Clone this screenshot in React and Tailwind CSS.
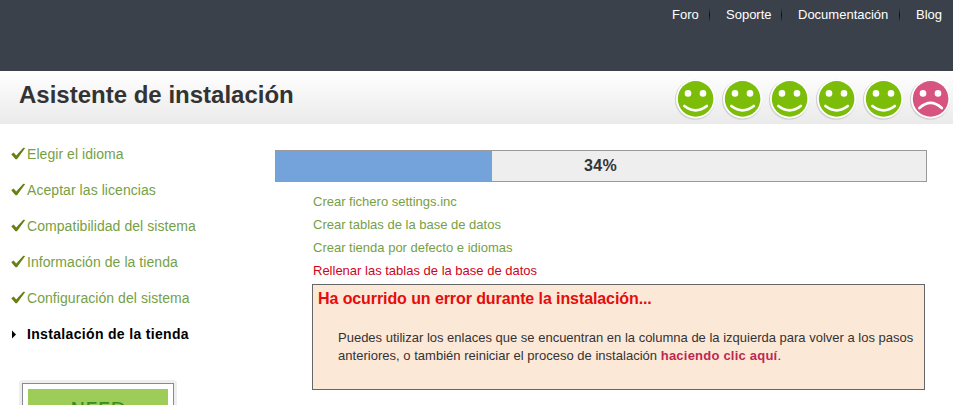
import React from 'react';
import clsx from 'clsx';

const links = [
  { label: 'Foro', width: 'w-[27px]' },
  { label: 'Soporte', width: 'w-[45px]' },
  { label: 'Documentación', width: 'w-[91px]' },
  { label: 'Blog', width: 'w-[27px]' },
];

const steps = [
  { label: 'Elegir el idioma', done: true },
  { label: 'Aceptar las licencias', done: true },
  { label: 'Compatibilidad del sistema', done: true },
  { label: 'Información de la tienda', done: true },
  { label: 'Configuración del sistema', done: true },
  { label: 'Instalación de la tienda', done: false },
];

const tasks = [
  { label: 'Crear fichero settings.inc' },
  { label: 'Crear tablas de la base de datos' },
  { label: 'Crear tienda por defecto e idiomas' },
  { label: 'Rellenar las tablas de la base de datos', failed: true },
];

const faces = [true, true, true, true, true, false];

const progress = 34;

function Face({ happy }) {
  return (
    <svg className="block w-[47px] h-[47px] shrink-0" viewBox="0 0 47 47">
      <circle cx="24" cy="24.7" r="20.1" fill="#d0d0d0" />
      <circle cx="24.6" cy="23.9" r="19.6" fill="#fff" />
      <circle cx="24.6" cy="23.9" r="17.8" fill={happy ? '#7cbd0a' : '#d6547f'} />
      <circle cx="17" cy="18.4" r="3.3" fill="#fff" />
      <circle cx="32" cy="18.4" r="3.3" fill="#fff" />
      <path
        d={happy ? 'M13.4 31Q24.6 39.6 35.8 31' : 'M13.4 33Q24.6 22.8 35.8 33'}
        fill="none"
        stroke="#fff"
        strokeWidth="2.7"
        strokeLinecap="round"
      />
    </svg>
  );
}

function StepIcon({ done }) {
  return (
    <svg className="block w-4 h-4 shrink-0" viewBox="0 0 16 16">
      {done ? (
        <path d="M0.2 8.2L2.7 6.4L5.2 9.6L12.3 1.8L14.2 2L6 13.2H4.5Z" fill="#668014" />
      ) : (
        <path d="M1 4.5L5 8.5L1 12.5Z" fill="#000" />
      )}
    </svg>
  );
}

export default function App() {
  return (
    <div className="w-[953px] h-[405px] overflow-hidden bg-white text-[#333] text-[13px] font-['Liberation_Sans',Arial,sans-serif]">
      <header className="h-[71px] bg-[#3b414b] flex justify-end items-start pt-[7px] pr-2.5">
        {links.map((link, i) => (
          <div key={link.label} className="flex items-center">
            {i > 0 && <span className="w-px h-3.5 ml-2.5 mr-4 bg-gradient-to-b from-[#3b414b] via-[#0c0d0f] to-[#3b414b]" />}
            <a href="#" className={clsx('block text-white leading-4 whitespace-nowrap', link.width)}>{link.label}</a>
          </div>
        ))}
      </header>

      {/* Title bar */}
      <div className="h-[53px] flex justify-between pl-[19px] bg-gradient-to-b from-white to-[#eaeaea]">
        <h1 className="pt-[9px] text-[24px] leading-[30px] font-bold">Asistente de instalación</h1>
        <div className="flex pt-1">
          {faces.map((happy, i) => <Face key={i} happy={happy} />)}
        </div>
      </div>

      <div className="flex">
        <aside className="w-[275px] shrink-0 pt-3 pl-[11px]">
          <ul>
            {steps.map((step) => (
              <li
                key={step.label}
                className={clsx(
                  'h-9 flex items-start text-[14px] leading-9',
                  step.done ? 'text-[#76a045] tracking-[0.06px]' : 'text-black font-bold tracking-[0.33px]'
                )}
              >
                <span className="pt-[10px]"><StepIcon done={step.done} /></span>
                <span className="whitespace-nowrap">{step.label}</span>
              </li>
            ))}
          </ul>
          {/* Help banner */}
          <div className="mt-7 ml-2 w-[158px] p-[3px] rounded bg-[#eeeef0]">
            <div className="border border-[#888a91] bg-white p-[5px] h-[90px]">
              <div className="h-full pt-2 bg-[#9dcc58] text-center text-[20px] leading-6 text-[#348f22] font-['DejaVu_Sans',sans-serif]">NEED</div>
            </div>
          </div>
        </aside>

        <main className="pt-[26px]">
          <div className="grid w-[652px] h-8 border border-[#999] bg-[#eee]">
            <div className="col-start-1 row-start-1 h-full bg-[#74a2da]" style={{ width: `calc(${progress}% - 5px)` }} />
            <p className="col-start-1 row-start-1 text-center text-[16px] leading-[29px] font-bold tracking-[0.3px] pr-px">{progress}%</p>
          </div>

          <ul className="pl-[38px] pt-2">
            {tasks.map((task) => (
              <li key={task.label} className={clsx('h-[23px] leading-[23px]', task.failed ? 'text-[#d0021b]' : 'text-[#76a045]')}>
                {task.label}
              </li>
            ))}
          </ul>

          <div className="ml-[37px] mt-[2px] w-[613px] h-[106px] border border-[#666] bg-[#fce8d7] pl-[5px]">
            <h2 className="pt-[4px] text-[16px] leading-5 font-bold tracking-[-0.09px] text-[#e60c0c]">Ha ocurrido un error durante la instalación...</h2>
            <p className="pl-5 pt-5 leading-[18px] whitespace-nowrap">
              Puedes utilizar los enlaces que se encuentran en la columna de la izquierda para volver a los pasos
              <br />
              <span className="tracking-[0.02px]">anteriores, o también reiniciar el proceso de instalación </span>
              <a href="#" className="font-bold tracking-[0.22px] text-[#bf2750]">haciendo clic aquí</a>.
            </p>
          </div>
        </main>
      </div>
    </div>
  );
}
